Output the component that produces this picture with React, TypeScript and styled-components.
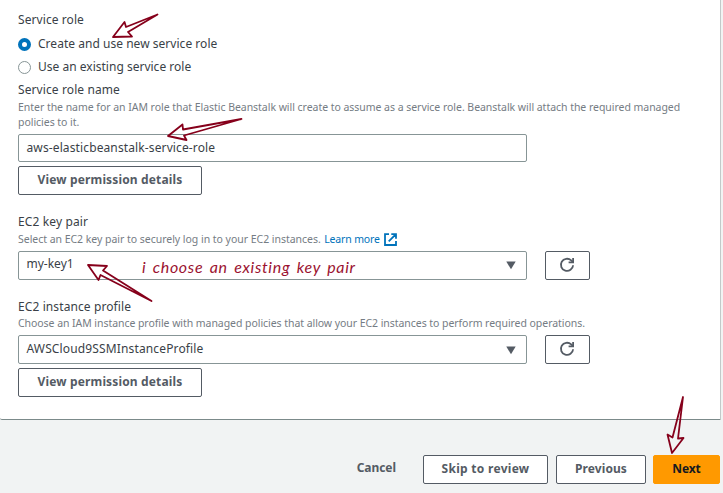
import React from "react";
import styled, { createGlobalStyle } from "styled-components";

const GlobalStyle = createGlobalStyle`
  * { box-sizing: border-box; }
  html, body { margin: 0; height: 493px; overflow: hidden; background: #f2f3f3; }
`;

const Page = styled.div`
  position: relative;
  width: 723px;
  height: 493px;
  overflow: hidden;
  background: #f1f3f3;
  color: #3a3f47;
  font: 12px/16px "Noto Sans", sans-serif;
  white-space: nowrap;
`;

const Card = styled.main`
  width: 721px;
  height: 420px;
  padding: 12px 18px 0;
  background: #fff;
  border-right: 1px solid #c3c9c9;
  border-bottom: 1px solid #7b8a8a;
  border-bottom-left-radius: 2px;
`;

const Spaced = styled.span<{ $track?: number }>`
  letter-spacing: ${(p) => p.$track ?? 0}px;
`;

const Label = styled.div<{ $track?: number }>`
  height: 16px;
  letter-spacing: ${(p) => p.$track ?? 0}px;
`;

const RadioRow = styled.label`
  display: flex;
  align-items: flex-start;
  gap: 7px;
  height: 23px;
`;

const Radios = styled.div`
  height: 54px;
  padding-top: 8px;
`;

const RadioDot = styled.i<{ $checked?: boolean }>`
  flex: none;
  width: 13px;
  height: 13px;
  margin-top: 2px;
  border: ${(p) => (p.$checked ? "4px solid #0073bb" : "1px solid #879596")};
  border-radius: 50%;
  background: #fff;
`;

const Hint = styled.p<{ $track?: number; $top?: number }>`
  margin: ${(p) => p.$top ?? 2}px 0 0;
  color: #757c84;
  font-size: 10.5px;
  line-height: 15px;
  letter-spacing: ${(p) => p.$track ?? -0.04}px;
`;

const Link = styled.a`
  color: #0073bb;
  margin-left: 3.5px;
  letter-spacing: -0.15px;

  svg { margin-left: 4px; vertical-align: -3px; }
`;

const Field = styled.div<{ $height: number; $inset?: number }>`
  display: flex;
  justify-content: space-between;
  width: 509px;
  height: ${(p) => p.$height}px;
  margin-top: 4px;
  padding: ${(p) => p.$inset ?? 5}px 10px 0 7.5px;
  border: 1px solid #879596;
  border-radius: 2px;
  background: #fff;

  svg { margin-top: 5px; }
`;

const SelectRow = styled.div`
  display: flex;
  align-items: flex-end;
  gap: 18px;
`;

const Button = styled.button<{ $width: number; $track?: number; $primary?: boolean }>`
  display: flex;
  align-items: center;
  justify-content: center;
  width: ${(p) => p.$width}px;
  height: 29px;
  padding: 0 0 2px;
  border: 1px solid ${(p) => (p.$primary ? "#ff9900" : "#545b64")};
  border-radius: 2px;
  background: ${(p) => (p.$primary ? "#ff9900" : "#fff")};
  color: ${(p) => (p.$primary ? "#16191f" : "#545b64")};
  font: bold 12px/16px "Noto Sans", sans-serif;
  letter-spacing: ${(p) => p.$track ?? 0}px;
`;

const IconButton = styled(Button)`
  padding: 0 1px 1px 0;
`;

const DetailsButton = styled(Button)`
  margin-top: 4px;
`;

const Section = styled.section<{ $top?: number }>`
  margin-top: ${(p) => p.$top ?? 0}px;
`;

const Footer = styled.footer`
  display: flex;
  justify-content: flex-end;
  gap: 8px;
  padding: 35px 3px 0 0;
`;

const NextButton = styled(Button)`
  margin-left: -1px;
`;

const Cancel = styled.span`
  margin-right: 19px;
  padding-top: 5px;
  color: #545b64;
  font-weight: bold;
  letter-spacing: -0.05px;
`;

const Annotations = styled.svg`
  position: absolute;
  inset: 0;
  pointer-events: none;
  fill: none;
  stroke: #86001b;
  stroke-width: 1.8;
  stroke-linejoin: round;
`;

const Note = styled.div`
  position: absolute;
  left: 142px;
  top: 256px;
  color: #9b1230;
  font: italic 16px/22px "Lato", sans-serif;
  letter-spacing: 0.68px;
  word-spacing: 2px;
`;

const Caret = () => (
  <svg width="10" height="9" viewBox="0 0 10 9">
    <path d="M.3 .5H9.700L5 8.300Z" fill="#545b64" />
  </svg>
);

const Refresh = () => (
  <svg width="16" height="16" viewBox="0 0 16 16" fill="none" stroke="#545b64" strokeWidth="1.8">
    <path d="M14.1 8.2A6.1 6.1 0 1 1 12.2 3.4L14 5.1" />
    <path d="M14.1 1V5.4H9.6" />
  </svg>
);

const External = () => (
  <svg width="13" height="13" viewBox="0 0 13 13" fill="none" stroke="#0073bb" strokeWidth="1.8">
    <path d="M5 1.1H1V12H12V8M7.3 1.1H12V5.8M12 1.1L4.7 8.4" />
  </svg>
);

export default function App() {
  return (
    <Page>
      <GlobalStyle />
      <Card>
        <Label $track={0.08}>Service role</Label>
        <Radios>
          <RadioRow>
            <RadioDot $checked />
            <Spaced $track={0.03}>Create and use new service role</Spaced>
          </RadioRow>
          <RadioRow>
            <RadioDot />
            <Spaced $track={0.01}>Use an existing service role</Spaced>
          </RadioRow>
        </Radios>
        <Section>
          <Label $track={0.1}>Service role name</Label>
          <Hint $track={-0.038}>
            Enter the name for an IAM role that Elastic Beanstalk will create to assume as a service role. Beanstalk will attach the required managed
            <br />
            policies to it.
          </Hint>
          <Field $height={28}>
            <Spaced $track={0.12}>aws-elasticbeanstalk-service-role</Spaced>
          </Field>
          <DetailsButton $width={184} $track={0.15}>View permission details</DetailsButton>
        </Section>
        <Section $top={19}>
          <Label $track={0.12}>EC2 key pair</Label>
          <Hint $track={-0.03}>
            Select an EC2 key pair to securely log in to your EC2 instances.
            <Link>Learn more<External /></Link>
          </Hint>
          <SelectRow>
            <Field $height={29} $inset={4}>
              <Spaced>my-key1</Spaced>
              <Caret />
            </Field>
            <IconButton $width={45} aria-label="Refresh key pairs"><Refresh /></IconButton>
          </SelectRow>
        </Section>
        <Section $top={19}>
          <Label $track={0.1}>EC2 instance profile</Label>
          <Hint $track={-0.055} $top={1}>
            Choose an IAM instance profile with managed policies that allow your EC2 instances to perform required operations.
          </Hint>
          <SelectRow>
            <Field $height={29}>
              <Spaced $track={0.14}>AWSCloud9SSMInstanceProfile</Spaced>
              <Caret />
            </Field>
            <IconButton $width={45} aria-label="Refresh instance profiles"><Refresh /></IconButton>
          </SelectRow>
          <DetailsButton $width={184} $track={0.15}>View permission details</DetailsButton>
        </Section>
      </Card>
      <Footer>
        <Cancel>Cancel</Cancel>
        <Button $width={125} $track={0.28}>Skip to review</Button>
        <Button $width={90} $track={0.08}>Previous</Button>
        <NextButton $width={67} $track={-0.1} $primary>Next</NextButton>
      </Footer>
      <Note>i choose an existing key pair</Note>
      <Annotations width="723" height="493" viewBox="0 0 723 493">
        <path d="M157.500 14.500L126 27L124.500 22L113 37L132 36.500L128 32Z" />
        <path d="M241.500 119L183 129.500L182.500 124.500L168 136L186.500 140L184 135.500Z" />
        <path d="M151.500 301L103 270.500L107 266L88 265L98.500 280L100.500 275Z" />
        <path d="M683 397L678 438.500L683.500 438L672 453L667.500 434.500L672.500 437.500Z" />
      </Annotations>
    </Page>
  );
}
